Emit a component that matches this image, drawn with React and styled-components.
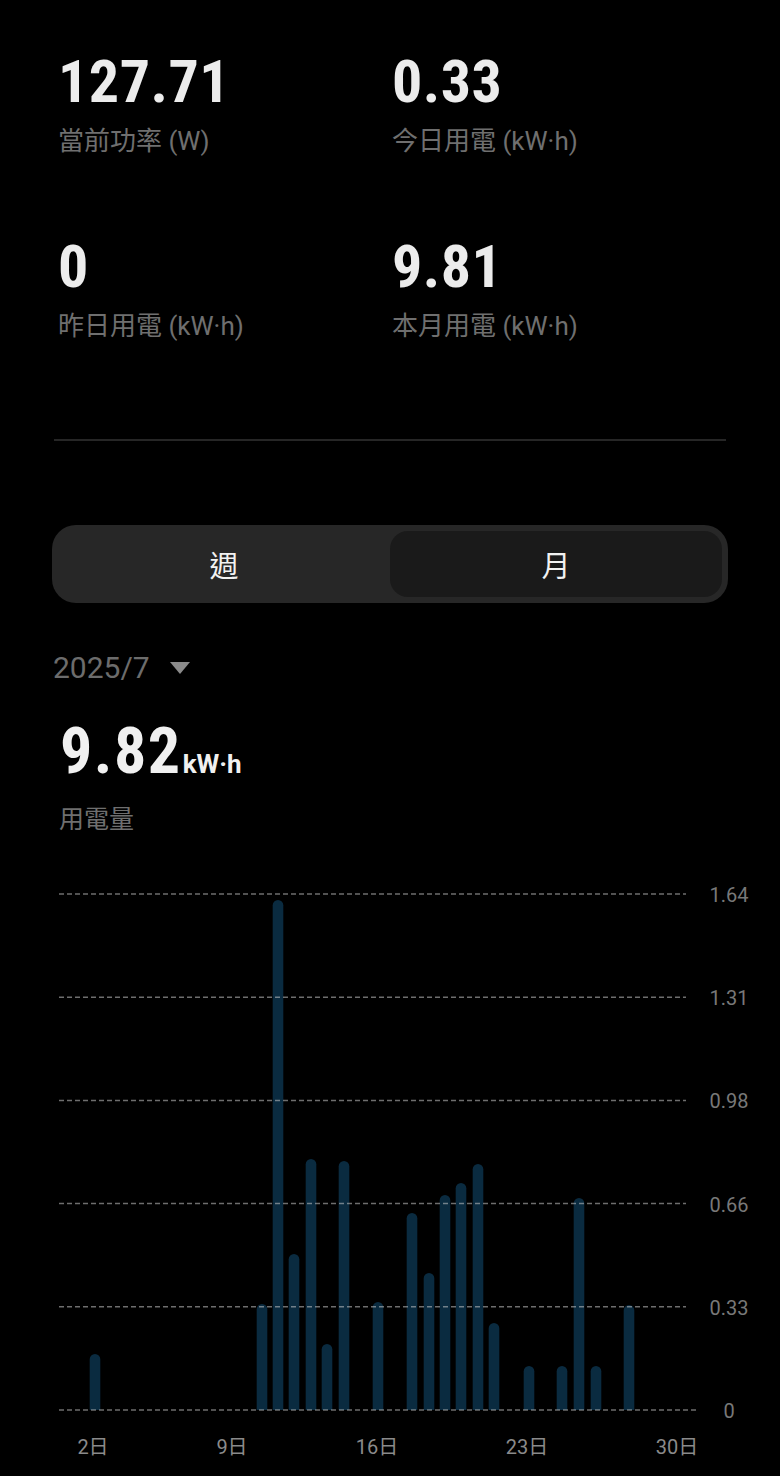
import styled, { createGlobalStyle } from "styled-components";

const GlobalStyle = createGlobalStyle`
  html, body {
    margin: 0;
    padding: 0;
    background: #000;
  }
  body {
    font-family: Roboto, "Noto Sans CJK TC", sans-serif;
    color: #ececec;
  }
`;

const stats = [
  { value: "127.71", label: "當前功率 (W)" },
  { value: "0.33", label: "今日用電 (kW·h)" },
  { value: "0", label: "昨日用電 (kW·h)" },
  { value: "9.81", label: "本月用電 (kW·h)" },
];

// [center x, top y] measured off the month view
const bars = [
  [95, 1354], [262, 1304], [278, 900], [294, 1254], [311, 1159],
  [327, 1344], [344, 1161], [378, 1302], [412, 1213], [429, 1273],
  [445, 1195], [461, 1183], [478, 1164], [494, 1323], [529, 1366],
  [562, 1366], [579, 1198], [596, 1366], [629, 1305],
];

const yTicks = ["1.64", "1.31", "0.98", "0.66", "0.33", "0"];
const xTicks = [
  { x: 93, label: "2日" },
  { x: 232, label: "9日" },
  { x: 377, label: "16日" },
  { x: 527, label: "23日" },
  { x: 677, label: "30日" },
];

const BASE = 1410;
const STEP = 103.2;

const barPath = (cx, top, w = 10.6) => {
  const r = w / 2;
  const l = cx - r;
  return `M${l} ${BASE} L${l} ${top + r} A${r} ${r} 0 0 1 ${cx + r} ${top + r} L${cx + r} ${BASE} Z`;
};

const App = () => {
  return (
    <Page>
      <GlobalStyle />
      <Header>
        <Stats>
          {stats.map((s) => (
            <Stat key={s.label}>
              <Value>{s.value}</Value>
              <Label>{s.label}</Label>
            </Stat>
          ))}
        </Stats>
        <Divider />
        <Toggle>
          <Segment>週</Segment>
          <Segment $active>月</Segment>
        </Toggle>
        <DatePicker>
          2025/7
          <Caret viewBox="0 0 20 12">
            <path d="M0 0 L20 0 L10 12 Z" fill="#8a8a8a" />
          </Caret>
        </DatePicker>
        <Total>
          9.82<Unit>kW·h</Unit>
        </Total>
        <Caption>用電量</Caption>
      </Header>
      <Chart viewBox="0 860 780 616">
        {bars.map(([cx, top]) => (
          <path key={cx} d={barPath(cx, top)} fill="#0a2b40" />
        ))}
        {yTicks.map((t, i) => {
          const y = BASE - (5 - i) * STEP;
          return (
            <g key={t}>
              <line
                x1="59"
                x2={i === 5 ? 698 : 686}
                y1={y}
                y2={y}
                stroke="rgba(200,200,200,0.55)"
                strokeWidth="1.5"
                strokeDasharray="5 3"
              />
              <AxisText x="729" y={y + 8} textAnchor="middle">
                {t}
              </AxisText>
            </g>
          );
        })}
        {xTicks.map((t) => (
          <AxisText key={t.label} x={t.x} y="1454" textAnchor="middle" $day>
            {t.label}
          </AxisText>
        ))}
      </Chart>
    </Page>
  );
};

const Page = styled.main`
  width: 780px;
  min-height: 1476px;
  background: #000;
  overflow: hidden;
`;

const Header = styled.section`
  padding: 52px 52px 0;
`;

const Stats = styled.div`
  display: grid;
  grid-template-columns: 334px 1fr;
  row-gap: 83px;
  padding-left: 6px;
`;

const Stat = styled.div`
  display: flex;
  flex-direction: column;
  gap: 16px;
`;

const Value = styled.div`
  font-family: "Roboto Condensed", Roboto, sans-serif;
  font-weight: 700;
  font-size: 60px;
  line-height: 60px;
  letter-spacing: 0.5px;
  color: #ececec;
`;

const Label = styled.div`
  font-size: 26px;
  line-height: 26px;
  color: #6f6f6f;
  white-space: nowrap;
`;

const Divider = styled.hr`
  margin: 100px 2px 0;
  border: 0;
  height: 2px;
  background: #262626;
`;

const Toggle = styled.div`
  margin-top: 84px;
  display: grid;
  grid-template-columns: 1fr 1fr;
  height: 78px;
  padding: 6px;
  box-sizing: border-box;
  border-radius: 24px;
  background: #272727;
`;

const Segment = styled.div`
  display: flex;
  align-items: center;
  justify-content: center;
  border-radius: 18px;
  font-size: 29px;
  color: #f2f2f2;
  background: ${(p) => (p.$active ? "#1a1a1a" : "transparent")};
`;

const DatePicker = styled.div`
  margin-top: 50px;
  display: flex;
  align-items: center;
  gap: 20px;
  padding-left: 1px;
  font-size: 30px;
  line-height: 30px;
  color: #6c6c6c;
`;

const Caret = styled.svg`
  width: 20px;
  height: 12px;
`;

const Total = styled.div`
  margin-top: 37px;
  padding-left: 8px;
  font-family: "Roboto Condensed", Roboto, sans-serif;
  font-weight: 700;
  font-size: 64px;
  line-height: 64px;
  letter-spacing: 1.5px;
  color: #f0f0f0;
`;

const Unit = styled.span`
  margin-left: 1px;
  font-family: Roboto, sans-serif;
  font-size: 26px;
  font-weight: 700;
  letter-spacing: 0;
`;

const Caption = styled.div`
  margin-top: 11px;
  padding-left: 7px;
  font-size: 25px;
  line-height: 25px;
  color: #6f6f6f;
`;

const Chart = styled.svg`
  display: block;
  margin-top: 28px;
  width: 780px;
  height: 616px;
`;

const AxisText = styled.text`
  font-family: Roboto, "Noto Sans CJK TC", sans-serif;
  font-size: 20px;
  fill: ${(p) => (p.$day ? "#8a8a8a" : "#787878")};
`;

export default App;
